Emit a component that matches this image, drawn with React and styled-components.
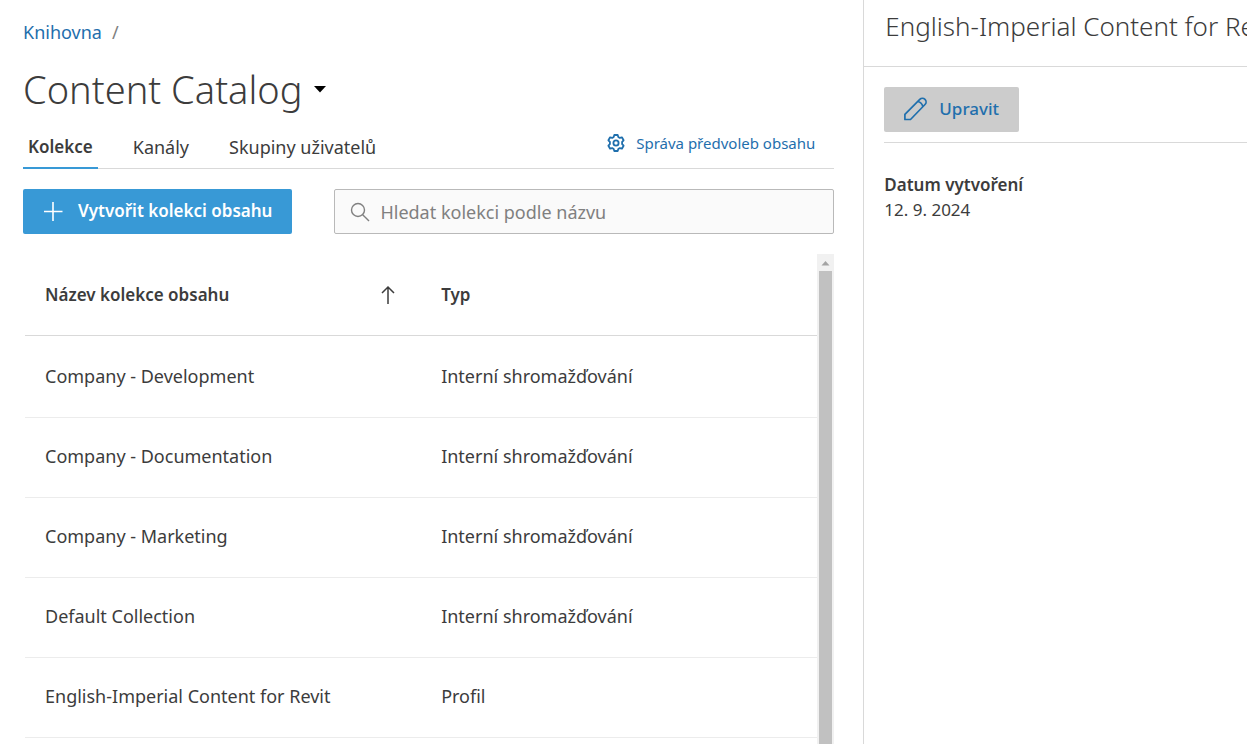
import React from "react";
import styled, { createGlobalStyle } from "styled-components";

const GlobalStyle = createGlobalStyle`
  *, *::before, *::after { box-sizing: border-box; }
  body {
    margin: 0;
    background: #fff;
    color: #3c3c3c;
    font-family: "Noto Sans", "Open Sans", sans-serif;
    font-size: 18px;
    font-weight: 400;
    line-height: 24px;
  }
  button, input { font: inherit; color: inherit; }
`;

const Page = styled.div`
  display: grid;
  grid-template-columns: minmax(0, 9fr) minmax(0, 4fr);
  height: 100vh;
  overflow: hidden;
`;

const Main = styled.main`
  display: flex;
  flex-direction: column;
  min-height: 0;
  padding: 20px 29px 0 23px;
`;

const Breadcrumb = styled.nav`
  display: flex;
  gap: 10px;
  color: #808080;
`;

const TextLink = styled.a`
  color: #1f6fad;
  text-decoration: none;
`;

const Title = styled.h1`
  margin: 20px 0 0;
  font-size: 38px;
  font-weight: 300;
  line-height: 50px;
`;

const TitleButton = styled.button`
  display: flex;
  align-items: center;
  gap: 11px;
  padding: 0;
  border: 0;
  background: none;
`;

const TabBar = styled.div`
  display: flex;
  justify-content: space-between;
  height: 43px;
  margin-top: 12px;
  border-bottom: 1px solid #d9d9d9;
`;

const TabList = styled.div`
  display: flex;
  gap: 30px;
  margin-bottom: -1px;
`;

const Tab = styled.button`
  padding: 0 5px;
  border: 0;
  border-bottom: 2px solid ${(p) => (p.$active ? "#3899d6" : "transparent")};
  background: none;
  font-size: ${(p) => (p.$active ? 17 : 18)}px;
  font-weight: ${(p) => (p.$active ? 600 : 400)};
`;

const SettingsLink = styled(TextLink)`
  display: flex;
  align-items: center;
  gap: 11px;
  height: 33px;
  padding-right: 19px;
  font-size: 15px;
`;

const Toolbar = styled.div`
  display: flex;
  gap: 42px;
  margin-top: 20px;
`;

const ActionButton = styled.button`
  display: inline-flex;
  flex: none;
  align-items: center;
  gap: ${(p) => (p.$primary ? 15 : 12)}px;
  height: 45px;
  padding: 0 20px 2px;
  border: 0;
  border-radius: 2px;
  background: ${(p) => (p.$primary ? "#3899d6" : "#cccccc")};
  color: ${(p) => (p.$primary ? "#fff" : "#1f6fad")};
  font-size: 17px;
  font-weight: ${(p) => (p.$primary ? 600 : 500)};
`;

const SearchBox = styled.label`
  display: flex;
  flex: 1;
  align-items: center;
  gap: 10px;
  height: 45px;
  padding: 0 15px;
  border: 1px solid #b9b9b9;
  border-radius: 2px;
  background: #fafafa;
`;

const SearchInput = styled.input`
  flex: 1;
  min-width: 0;
  padding: 0;
  border: 0;
  outline: 0;
  background: none;
  &::placeholder { color: #808080; opacity: 1; }
`;

const ListArea = styled.div`
  display: flex;
  flex: 1;
  min-height: 0;
  margin-top: 20px;
  padding-left: 2px;
`;

const TableClip = styled.div`
  flex: 1;
  min-width: 0;
  overflow: hidden;
`;

const Table = styled.table`
  width: 100%;
  table-layout: fixed;
  border-collapse: separate;
  border-spacing: 0;
`;

const HeadCell = styled.th`
  height: 82px;
  padding: 0 20px;
  border-bottom: 1px solid #d9d9d9;
  text-align: left;
  font-size: 17px;
  font-weight: 600;
`;

const HeadContent = styled.div`
  display: flex;
  align-items: center;
  justify-content: space-between;
  padding-right: 6px;
`;

const Cell = styled.td`
  height: 80px;
  padding: 0 20px 3px;
  border-bottom: 1px solid #ececec;
  tr:first-child > & { height: 82px; padding-bottom: 2px; }
`;

const ScrollTrack = styled.div`
  display: flex;
  flex-direction: column;
  align-items: center;
  width: 17px;
  background: #f1f1f1;
`;

const ScrollArrow = styled.svg`
  flex: none;
  width: 17px;
  height: 17px;
`;

const ScrollThumb = styled.div`
  flex: 1;
  width: 13px;
  background: #c1c1c1;
`;

const Details = styled.aside`
  border-left: 1px solid #d9d9d9;
  overflow: hidden;
`;

const DetailsTitle = styled.h2`
  height: 67px;
  margin: 0;
  padding: 9px 0 0 21px;
  border-bottom: 1px solid #d9d9d9;
  font-size: 26px;
  font-weight: 300;
  line-height: 34px;
  white-space: nowrap;
`;

const DetailsBody = styled.div`
  padding: 20px 0 0 20px;
`;

const DetailsActions = styled.div`
  display: flex;
  padding-bottom: 10px;
  border-bottom: 1px solid #d9d9d9;
`;

const Facts = styled.dl`
  margin: 29px 0 0;
  font-size: 17px;
  line-height: 25px;
`;

const FactName = styled.dt`
  font-weight: 600;
`;

const FactValue = styled.dd`
  margin: 0;
`;

const CaretIcon = () => (
  <svg width="14" height="8" viewBox="0 0 14 8" aria-hidden="true">
    <path d="M1 1h12L7 7.5z" fill="#000" />
  </svg>
);

const GearIcon = () => (
  <svg width="18" height="18" viewBox="0 0 18 18" fill="none" stroke="#1f6fad" strokeWidth="1.8" strokeLinejoin="round" aria-hidden="true">
    <path d="M7.3 1h3.4l.6 2 1.5.9 2.1-.6 1.7 3-1.5 1.6v2.2l1.5 1.6-1.7 3-2.1-.6-1.5.9-.6 2H7.3l-.6-2-1.5-.9-2.1.6-1.7-3 1.5-1.6V7.9L1.4 6.3l1.7-3 2.1.6L6.7 3z" />
    <circle cx="9" cy="9" r="2.6" />
  </svg>
);

const PlusIcon = () => (
  <svg width="20" height="20" viewBox="0 0 20 20" stroke="#fff" strokeWidth="1.6" aria-hidden="true">
    <path d="M10 1v19M1 10.5h18.5" />
  </svg>
);

const SearchIcon = () => (
  <svg width="20" height="20" viewBox="0 0 20 20" fill="none" stroke="#808080" strokeWidth="1.4" aria-hidden="true">
    <circle cx="8" cy="8" r="6.5" />
    <path d="M12.7 12.7 19 19" />
  </svg>
);

const SortIcon = () => (
  <svg width="14" height="20" viewBox="0 0 14 20" fill="none" stroke="#3c3c3c" strokeWidth="1.5" aria-hidden="true">
    <path d="M7 19V2M1 8l6-6 6 6" />
  </svg>
);

const PencilIcon = () => (
  <svg width="23" height="24" viewBox="0 0 23 24" fill="none" stroke="#1f6fad" strokeWidth="1.7" strokeLinejoin="round" aria-hidden="true">
    <path d="M.9 17.3 15.8 2.3a3.7 3.7 0 0 1 5.2 0 3.7 3.7 0 0 1 0 5.2L6.5 22.5H.9zM13.6 4.5c2.8.5 4.7 2.3 5.2 5.2" />
  </svg>
);

const collections = [
  ["Company - Development", "Interní shromažďování"],
  ["Company - Documentation", "Interní shromažďování"],
  ["Company - Marketing", "Interní shromažďování"],
  ["Default Collection", "Interní shromažďování"],
  ["English-Imperial Content for Revit", "Profil"],
];

export default function App() {
  return (
    <Page>
      <GlobalStyle />
      <Main>
        <Breadcrumb>
          <TextLink href="#library">Knihovna</TextLink>
          <span>/</span>
        </Breadcrumb>
        <Title>
          <TitleButton type="button">
            Content Catalog
            <CaretIcon />
          </TitleButton>
        </Title>
        <TabBar>
          <TabList role="tablist">
            <Tab type="button" role="tab" aria-selected="true" $active>Kolekce</Tab>
            <Tab type="button" role="tab" aria-selected="false">Kanály</Tab>
            <Tab type="button" role="tab" aria-selected="false">Skupiny uživatelů</Tab>
          </TabList>
          <SettingsLink href="#settings">
            <GearIcon />
            Správa předvoleb obsahu
          </SettingsLink>
        </TabBar>
        <Toolbar>
          <ActionButton type="button" $primary>
            <PlusIcon />
            Vytvořit kolekci obsahu
          </ActionButton>
          <SearchBox>
            <SearchIcon />
            <SearchInput type="search" aria-label="Hledat kolekci podle názvu" placeholder="Hledat kolekci podle názvu" />
          </SearchBox>
        </Toolbar>
        <ListArea>
          <TableClip>
            <Table>
              <thead>
                <tr>
                  <HeadCell scope="col" aria-sort="ascending">
                    <HeadContent>
                      Název kolekce obsahu
                      <SortIcon />
                    </HeadContent>
                  </HeadCell>
                  <HeadCell scope="col">Typ</HeadCell>
                </tr>
              </thead>
              <tbody>
                {collections.map(([name, type]) => (
                  <tr key={name}>
                    <Cell>{name}</Cell>
                    <Cell>{type}</Cell>
                  </tr>
                ))}
              </tbody>
            </Table>
          </TableClip>
          <ScrollTrack aria-hidden="true">
            <ScrollArrow viewBox="0 0 17 17">
              <path d="M4.5 11.5h8L8.5 7z" fill="#a3a3a3" />
            </ScrollArrow>
            <ScrollThumb />
          </ScrollTrack>
        </ListArea>
      </Main>
      <Details>
        <DetailsTitle>English-Imperial Content for Revit</DetailsTitle>
        <DetailsBody>
          <DetailsActions>
            <ActionButton type="button">
              <PencilIcon />
              Upravit
            </ActionButton>
          </DetailsActions>
          <Facts>
            <FactName>Datum vytvoření</FactName>
            <FactValue>12. 9. 2024</FactValue>
          </Facts>
        </DetailsBody>
      </Details>
    </Page>
  );
}
